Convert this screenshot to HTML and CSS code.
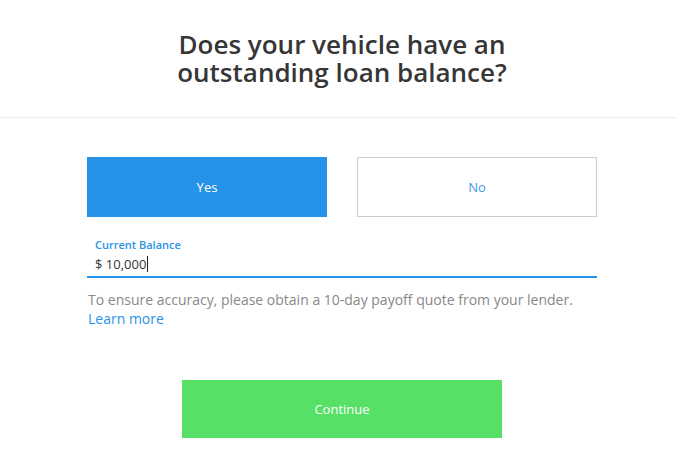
FILE: index.html
```html
<!DOCTYPE html>
<html lang="en">
<head>
<meta charset="utf-8">
<title>Loan balance</title>
<link rel="stylesheet" href="styles.css">
</head>
<body>
<header class="header">
  <h1 class="title">Does your vehicle have an<br>outstanding loan balance?</h1>
</header>
<main class="content">
  <div class="choices">
    <button class="choice choice-active" type="button">Yes</button>
    <button class="choice" type="button">No</button>
  </div>
  <div class="field">
    <label class="field-label">Current Balance</label>
    <div class="field-input">$ 10,000<span class="caret"></span></div>
  </div>
  <p class="note">To ensure accuracy, please obtain a 10-day payoff quote from your lender.<br><a class="link" href="#">Learn more</a></p>
  <div class="actions">
    <button class="continue" type="button">Continue</button>
  </div>
</main>
</body>
</html>
```

FILE: styles.css
```css
html, body {
  margin: 0;
  padding: 0;
  background: #fff;
}
body {
  font-family: "Open Sans", "Noto Sans", sans-serif;
  color: #333;
  width: 677px;
  height: 470px;
  overflow: hidden;
}
.header {
  padding: 30px 80px 31px 87px;
  border-bottom: 1px solid #ececec;
}
.title {
  margin: 0;
  font-size: 26px;
  line-height: 28px;
  font-weight: 600;
  text-align: center;
  color: #363636;
}
.content {
  padding: 39px 80px 0 87px;
}
.choices {
  display: flex;
  gap: 30px;
}
.choice {
  flex: 1;
  height: 60px;
  border: 1px solid #ccc;
  background: #fff;
  color: #3c9bea;
  font-family: inherit;
  font-size: 13px;
  padding: 0;
  cursor: pointer;
}
.choice-active {
  background: #2693e8;
  border-color: #2693e8;
  color: #fff;
}
.field {
  margin-top: 20px;
  border-bottom: 2px solid #2693e8;
  padding: 0 8px 3px;
}
.field-label {
  display: block;
  font-size: 11px;
  line-height: 15px;
  font-weight: 600;
  color: #2a93e8;
}
.field-input {
  margin-top: 3px;
  font-size: 13px;
  line-height: 18px;
  color: #333;
  display: flex;
  align-items: center;
}
.caret {
  display: inline-block;
  width: 1px;
  height: 16px;
  background: #222;
  margin-left: 1px;
}
.note {
  margin: 12px 0 0 1px;
  font-size: 14px;
  line-height: 19px;
  color: #888;
}
.link {
  color: #2a93e8;
  text-decoration: none;
}
.actions {
  display: flex;
  justify-content: center;
  margin-top: 52px;
}
.continue {
  width: 320px;
  height: 58px;
  border: 0;
  background: #57e066;
  color: #fff;
  font-family: inherit;
  font-size: 13px;
  padding: 0;
  cursor: pointer;
}
```
